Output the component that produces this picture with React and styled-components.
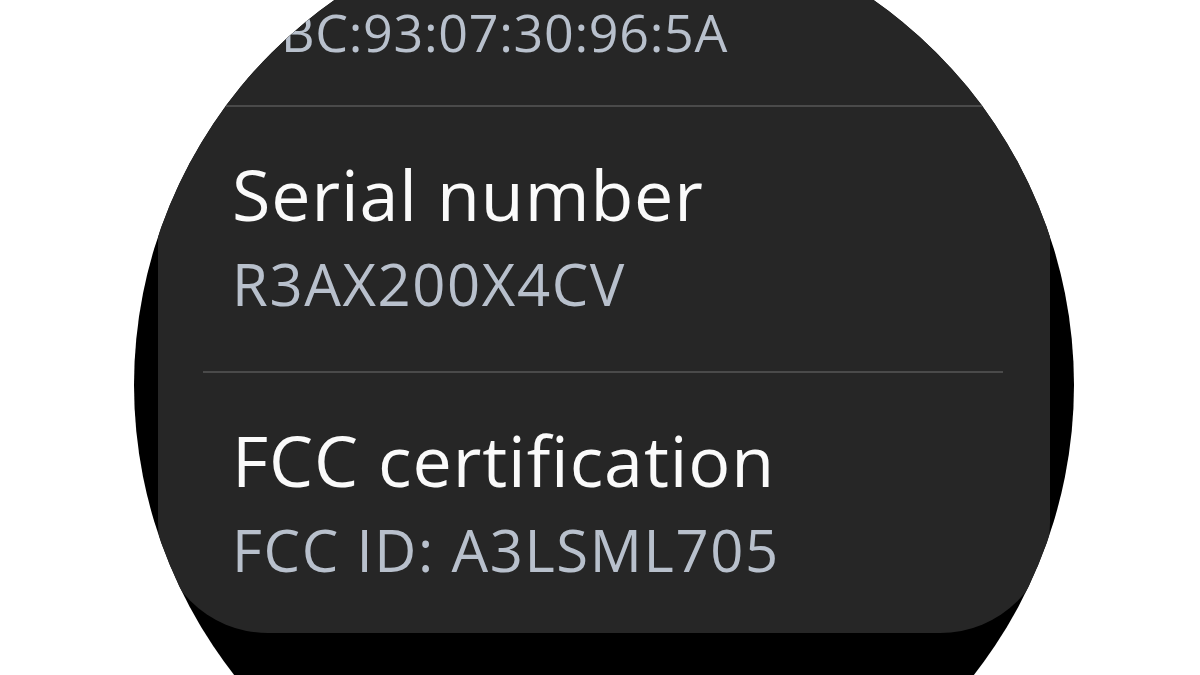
import styled, { createGlobalStyle } from "styled-components"

const Global = createGlobalStyle`
    html, body {
        margin: 0;
        padding: 0;
        background: #ffffff;
        overflow: hidden;
    }
    body {
        font-family: 'Open Sans', 'Liberation Sans', sans-serif;
    }
`

const items = [
    { title: "Serial number", value: "R3AX200X4CV" },
    { title: "FCC certification", value: "FCC ID: A3LSML705", last: true },
]

export default function App() {
    return (
        <Page>
            <Global />
            <Watch>
                <Card>
                    <TopRow>BC:93:07:30:96:5A</TopRow>
                    {items.map((item) => (
                        <div key={item.title}>
                            <Divider />
                            <Item $last={item.last}>
                                <Title>{item.title}</Title>
                                <Value>{item.value}</Value>
                            </Item>
                        </div>
                    ))}
                </Card>
            </Watch>
        </Page>
    )
}

const Page = styled.div`
    width: 1200px;
    height: 675px;
    overflow: hidden;
    display: flex;
    justify-content: center;
    padding-left: 8px;
    box-sizing: border-box;
`
const Watch = styled.div`
    flex: none;
    width: 940px;
    height: 940px;
    margin-top: -85px;
    border-radius: 50%;
    background: #000000;
    overflow: hidden;
`
const Card = styled.div`
    width: 892px;
    height: 718px;
    margin-left: 24px;
    background: #262626;
    border-radius: 0 0 110px 110px;
    display: flex;
    flex-direction: column;
`
const TopRow = styled.div`
    height: 190px;
    box-sizing: border-box;
    padding: 85px 0 0 123px;
    font-size: 52px;
    line-height: 64px;
    letter-spacing: 0.7px;
    color: #b8c0cc;
`
const Divider = styled.div`
    width: 800px;
    height: 2px;
    margin-left: 45px;
    background: #4a4a4a;
`
const Item = styled.div`
    height: ${(p) => (p.$last ? "260px" : "264px")};
    box-sizing: border-box;
    padding: 45px 0 0 74px;
`
const Title = styled.div`
    font-size: 70px;
    line-height: 84px;
    letter-spacing: 0.9px;
    color: #fafafa;
`
const Value = styled.div`
    margin-top: 6px;
    font-size: 58px;
    line-height: 84px;
    letter-spacing: 1.6px;
    color: #b8c0cc;
`
